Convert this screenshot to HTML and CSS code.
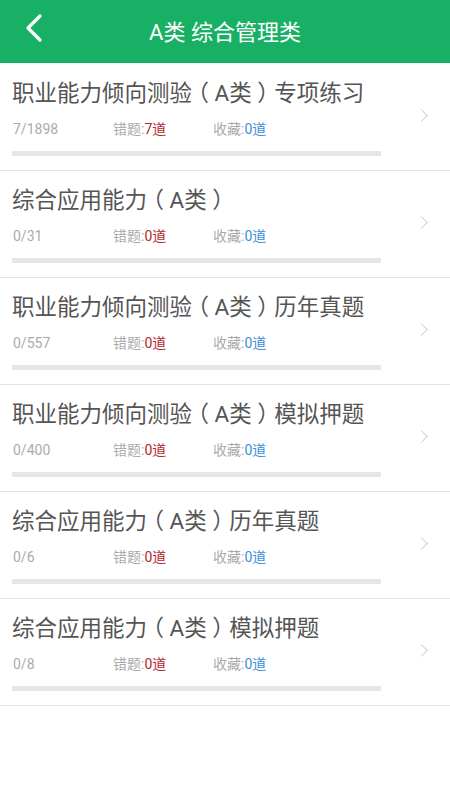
FILE: index.html
```html
<!DOCTYPE html>
<html lang="zh-CN">
<head>
    <meta charset="UTF-8">
    <meta name="viewport" content="width=device-width, initial-scale=1.0">
    <title>A类 综合管理类</title>
    <link rel="stylesheet" href="styles.css">
</head>
<body>

<header class="topbar">
    <a class="back" href="#">
        <svg width="20" height="30" viewBox="0 0 20 30"><path d="M16 3 L4 15 L16 27" fill="none" stroke="#fff" stroke-width="3.2" stroke-linecap="round" stroke-linejoin="round"/></svg>
    </a>
    <h1>A类 综合管理类</h1>
</header>

<div class="list">

    <div class="item">
        <div class="info">
            <div class="title">职业能力倾向测验<span class="br">（</span>A类<span class="br">）</span>专项练习</div>
            <div class="stats">
                <span class="count">7/1898</span>
                <span class="wrong">错题:<em>7道</em></span>
                <span class="fav">收藏:<em>0道</em></span>
            </div>
            <div class="bar"></div>
        </div>
        <span class="arrow"></span>
    </div>

    <div class="item">
        <div class="info">
            <div class="title">综合应用能力<span class="br">（</span>A类<span class="br">）</span></div>
            <div class="stats">
                <span class="count">0/31</span>
                <span class="wrong">错题:<em>0道</em></span>
                <span class="fav">收藏:<em>0道</em></span>
            </div>
            <div class="bar"></div>
        </div>
        <span class="arrow"></span>
    </div>

    <div class="item">
        <div class="info">
            <div class="title">职业能力倾向测验<span class="br">（</span>A类<span class="br">）</span>历年真题</div>
            <div class="stats">
                <span class="count">0/557</span>
                <span class="wrong">错题:<em>0道</em></span>
                <span class="fav">收藏:<em>0道</em></span>
            </div>
            <div class="bar"></div>
        </div>
        <span class="arrow"></span>
    </div>

    <div class="item">
        <div class="info">
            <div class="title">职业能力倾向测验<span class="br">（</span>A类<span class="br">）</span>模拟押题</div>
            <div class="stats">
                <span class="count">0/400</span>
                <span class="wrong">错题:<em>0道</em></span>
                <span class="fav">收藏:<em>0道</em></span>
            </div>
            <div class="bar"></div>
        </div>
        <span class="arrow"></span>
    </div>

    <div class="item">
        <div class="info">
            <div class="title">综合应用能力<span class="br">（</span>A类<span class="br">）</span>历年真题</div>
            <div class="stats">
                <span class="count">0/6</span>
                <span class="wrong">错题:<em>0道</em></span>
                <span class="fav">收藏:<em>0道</em></span>
            </div>
            <div class="bar"></div>
        </div>
        <span class="arrow"></span>
    </div>

    <div class="item">
        <div class="info">
            <div class="title">综合应用能力<span class="br">（</span>A类<span class="br">）</span>模拟押题</div>
            <div class="stats">
                <span class="count">0/8</span>
                <span class="wrong">错题:<em>0道</em></span>
                <span class="fav">收藏:<em>0道</em></span>
            </div>
            <div class="bar"></div>
        </div>
        <span class="arrow"></span>
    </div>

</div>

</body>
</html>
```

FILE: styles.css
```css
body { margin: 0; background: #fff; font-family: Roboto, "Noto Sans CJK SC", sans-serif; color: #555; }
.topbar { height: 63px; background: #17b064; display: flex; align-items: center; justify-content: center; position: relative; }
.topbar h1 { margin: 0 0 4px; font-size: 22px; font-weight: normal; color: #fff; }
.back { position: absolute; left: 24px; top: 13px; display: block; width: 20px; height: 30px; }
.list { border-top: 1px solid #fff; }
.item { height: 106px; border-bottom: 1px solid #e3e3e3; display: flex; align-items: center; }
.info { width: 369px; padding-left: 12px; }
.title { font-size: 22.5px; line-height: 30px; color: #555; margin-top: -6px; white-space: nowrap; }
/* full-width brackets sit centred in their cell on the device */
.br { display: inline-block; width: 1em; text-align: center; font-feature-settings: "halt"; }
.stats { display: flex; font-size: 14px; color: #ababab; margin-top: 11px; line-height: 20px; }
.stats span { display: block; }
.count { width: 100px; padding-left: 1px; }
.wrong { width: 100px; }
.stats em { font-style: normal; }
.wrong em { color: #b3282d; }
.fav em { color: #3d8fd8; }
.bar { height: 5px; background: #e6e6e6; margin-top: 12px; margin-bottom: -6px; }
.arrow { width: 8px; height: 8px; border-top: 1.5px solid #cfcfcf; border-right: 1.5px solid #cfcfcf; transform: rotate(45deg); margin-left: 36px; margin-top: -4px; }
```
